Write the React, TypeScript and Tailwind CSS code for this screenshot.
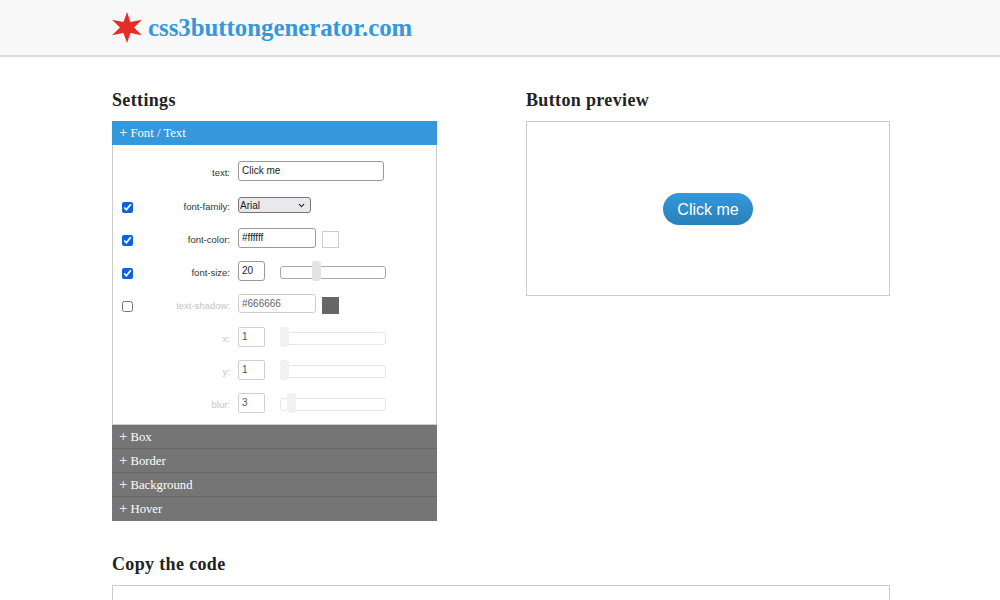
import { ChevronDown } from "lucide-react";

const inputBase =
  "h-[20px] rounded-[3px] border border-[#999] bg-white px-[3px] text-[10px] text-[#222] outline-none font-['Liberation_Sans',sans-serif]";

function Heading({ children }: { children: React.ReactNode }) {
  return (
    <h2 className="text-[18px] leading-[22px] font-bold tracking-[0.35px] text-[#222] font-['Liberation_Serif',serif]">
      {children}
    </h2>
  );
}

function Slider({ left, disabled }: { left: number; disabled?: boolean }) {
  return (
    <div className={`relative ml-[15px] mt-[4px] h-[13px] w-[106px] rounded-[3px] border ${disabled ? "border-[#e6e6e6]" : "border-[#aaa]"} bg-white`}>
      <div
        className={`absolute top-[-6px] h-[20px] w-[9px] rounded-[3px] ${disabled ? "bg-[#f1f1f1]" : "bg-[#e3e3e3]"}`}
        style={{ left }}
      />
    </div>
  );
}

function Row({
  label,
  check,
  dim,
  tall,
  children,
}: {
  label: string;
  check?: boolean;
  dim?: boolean;
  tall?: boolean;
  children: React.ReactNode;
}) {
  return (
    <div className={`flex items-center ${tall ? "h-[35px]" : "h-[33px]"}`}>
      <div className="mt-[6px] flex w-[20px] justify-end">
        {check !== undefined && (
          <input type="checkbox" defaultChecked={check} className="m-0 h-[11px] w-[11px] accent-[#0b63d8]" />
        )}
      </div>
      <div className={`mt-[6px] w-[97px] text-right text-[9.5px] ${dim ? "text-[#c4c4c4]" : "text-[#333]"} font-['Liberation_Sans',sans-serif]`}>
        {label}:
      </div>
      <div className="ml-[8px] flex items-center">{children}</div>
    </div>
  );
}

function SubRow({ label, value, left }: { label: string; value: string; left: number }) {
  return (
    <Row label={label} dim>
      <input
        readOnly
        value={value}
        className="h-[20px] w-[27px] rounded-[2px] border border-[#cfcfcf] bg-white px-[3px] text-[10px] text-[#555] outline-none font-['Liberation_Sans',sans-serif]"
      />
      <Slider left={left} disabled />
    </Row>
  );
}

function BarTitle({ title }: { title: string }) {
  return (
    <>
      <span className="mr-[3px] mt-[-1px] text-[15px] leading-none">+</span>
      <span className="mt-[2px]">{title}</span>
    </>
  );
}

function AccordionBar({ title }: { title: string }) {
  return (
    <div className="flex h-[24px] items-center border-b border-[#666] bg-[#757575] pl-[7px] text-[12.7px] text-white last:border-b-0 font-['Liberation_Serif',serif]">
      <BarTitle title={title} />
    </div>
  );
}

export default function App() {
  return (
    <div className="h-[600px] overflow-hidden bg-white">
      <header className="h-[57px] border-b-2 border-[#ddd] bg-[#f8f8f8]">
        <div className="ml-[112px] flex h-[55px] w-[778px] items-center">
          <svg width="30" height="31" viewBox="0 0 30 32" preserveAspectRatio="none">
            <polygon
              fill="#e52d27"
              points="15,0 18.5,10.4 30,8 22,16 30,24 18.5,21.6 15,32 11.5,21.6 0,24 8,16 0,8 11.5,10.4"
            />
          </svg>
          <span className="ml-[6px] text-[24.8px] font-bold text-[#3498db] font-['Liberation_Serif',serif]">
            css3buttongenerator.com
          </span>
        </div>
      </header>

      <main className="ml-[112px] w-[778px] pt-[32px]">
        <div className="flex">
          <section className="w-[325px]">
            <Heading>Settings</Heading>
            <div className="mt-[10px]">
              <div className="flex h-[24px] items-center bg-[#3498db] pl-[7px] text-[12.7px] text-white font-['Liberation_Serif',serif]">
                <BarTitle title="Font / Text" />
              </div>
              <div className="h-[280px] border-x border-b border-[#ccc] bg-white pt-[8px]">
                <Row label="text" tall>
                  <input readOnly value="Click me" className={`${inputBase} w-[146px] text-[9px]`} />
                </Row>
                <Row label="font-family" check>
                  <div className="relative">
                    <select className="block h-[16px] w-[73px] appearance-none rounded-[3px] border border-[#767676] bg-[#e9e9ed] pl-[1px] text-[10px] text-[#222] font-['Liberation_Sans',sans-serif]">
                      <option>Arial</option>
                    </select>
                    <ChevronDown size={9} strokeWidth={3} className="pointer-events-none absolute right-[5px] top-[4px] text-[#222]" />
                  </div>
                </Row>
                <Row label="font-color" check>
                  <input readOnly value="#ffffff" className={`${inputBase} w-[78px]`} />
                  <div className="ml-[6px] mt-[4px] h-[17px] w-[17px] border border-[#ccc] bg-white" />
                </Row>
                <Row label="font-size" check>
                  <input readOnly value="20" className={`${inputBase} w-[27px]`} />
                  <Slider left={31} />
                </Row>
                <Row label="text-shadow" check={false} dim>
                  <input
                    readOnly
                    value="#666666"
                    className="h-[19px] w-[78px] rounded-[3px] border border-[#ccc] bg-white px-[3px] text-[10px] text-[#666] outline-none font-['Liberation_Sans',sans-serif]"
                  />
                  <div className="ml-[6px] mt-[4px] h-[17px] w-[17px] bg-[#666]" />
                </Row>
                <SubRow label="x" value="1" left={-1} />
                <SubRow label="y" value="1" left={-1} />
                <SubRow label="blur" value="3" left={6} />
              </div>
              <AccordionBar title="Box" />
              <AccordionBar title="Border" />
              <AccordionBar title="Background" />
              <AccordionBar title="Hover" />
            </div>
          </section>

          <section className="ml-[89px] w-[364px]">
            <Heading>Button preview</Heading>
            <div className="mt-[10px] flex h-[175px] justify-center border border-[#ccc] pt-[71px]">
              <button className="h-[32px] w-[90px] rounded-[17px] bg-gradient-to-b from-[#3498db] to-[#2980b9] pt-[1px] text-[16px] text-white font-['Liberation_Sans',sans-serif]">
                Click me
              </button>
            </div>
          </section>
        </div>

        <div className="mt-[32px]">
          <Heading>Copy the code</Heading>
          <div className="mt-[10px] h-[200px] border border-[#ccc]" />
        </div>
      </main>
    </div>
  );
}
